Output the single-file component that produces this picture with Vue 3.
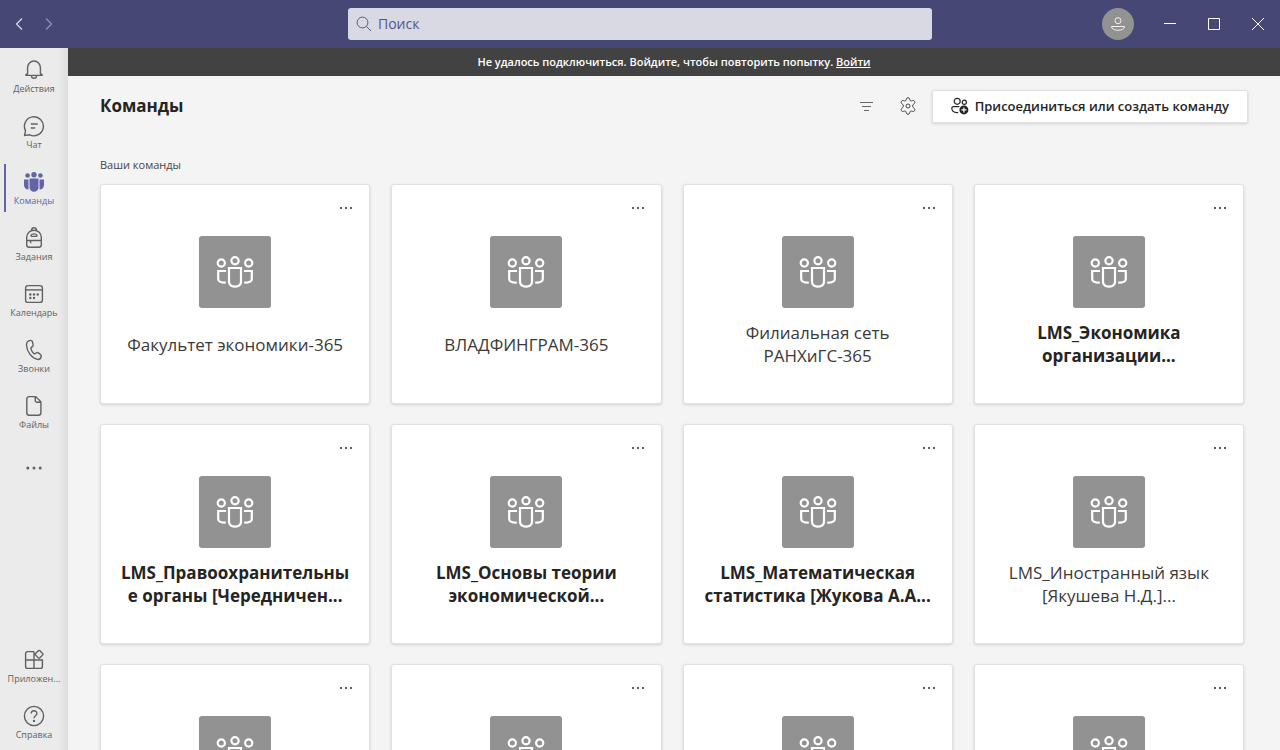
<script setup>
const nav = [
  { id: 'bell', label: 'Действия' },
  { id: 'chat', label: 'Чат' },
  { id: 'teams', label: 'Команды', active: true },
  { id: 'tasks', label: 'Задания' },
  { id: 'calendar', label: 'Календарь' },
  { id: 'calls', label: 'Звонки' },
  { id: 'files', label: 'Файлы' },
]
const footNav = [
  { id: 'apps', label: 'Приложен...' },
  { id: 'help', label: 'Справка' },
]
const icons = {
  bell: '<path d="M2.6 16.4h16.8M4 16.2l.6-1.7V8.700a6.400 6.700 0 0 1 12.800 0v5.800l.6 1.700M2.600 16.400c0-.8 1.500-1 2-2M19.400 16.400c0-.8-1.500-1-2-2M8.500 16.700a2.500 2.600 0 0 0 5 0"/>',
  chat: '<path d="M1.600 20.400l.9-4.700a9.500 9.500 0 1 1 4.200 4.100zM7.800 9h7M7.800 13h4.400"/>',
  teams: '<g fill="currentColor" stroke="none"><circle cx="11" cy="3.700" r="2.700"/><circle cx="4.600" cy="4.500" r="2.300"/><circle cx="17.400" cy="4.500" r="2.300"/><path d="M6.500 7.600h9v8.900a4.500 4.200 0 0 1-9 0zM1 8.400h4.500v10.200C2.700 18.300 1 16.500 1 14.200zM21 8.400h-4.500v10.200c2.800-.3 4.500-2.100 4.500-4.400z"/></g>',
  tasks: '<path d="M8.700 3.300V2.700a2.300 1.900 0 0 1 4.600 0v.6M3.700 10.500a7.300 7.300 0 0 1 14.600 0v7.300a2.500 2.500 0 0 1-2.500 2.500H6.200a2.500 2.500 0 0 1-2.500-2.500zM3.900 13.500h14.200M7.600 13.500v2.800M8 8.600a3.100 2.300 0 0 1 6 0c0 .6-.3.800-.8.800H8.800c-.5 0-.8-.2-.8-.8z"/>',
  calendar: '<rect x="2.600" y="2.600" width="16.800" height="16.800" rx="2.500"/><path d="M2.600 6.900h16.800"/><g fill="currentColor" stroke="none"><circle cx="7.300" cy="11.500" r="1.200"/><circle cx="11" cy="11.500" r="1.200"/><circle cx="14.700" cy="11.500" r="1.200"/><circle cx="7.300" cy="15" r="1.200"/><circle cx="11" cy="15" r="1.200"/></g>',
  calls: '<path d="M7.400 1.400c-2.100.3-4 1.900-3.900 4.600.2 6.900 5.600 13.300 10.800 14.400 1.900.3 3.500-1.200 3.900-2.900.2-.8 0-1.200-.5-1.700l-2.300-1.900c-.7-.6-1.400-.6-2.100-.1l-1.200.9c-.5.300-.9.300-1.300-.1-1.600-1.600-2.500-3.300-2.900-5-.1-.5.100-.9.500-1.200l1-.8c.7-.5.900-1.200.7-1.900L9.400 2.500c-.3-.8-1-1.300-2-1.100z"/>',
  files: '<path d="M6.300 1.600h6.400l5.200 5.200v11a2.500 2.500 0 0 1-2.500 2.500H6.300a2.500 2.500 0 0 1-2.500-2.500V4.100a2.500 2.500 0 0 1 2.500-2.500zM12.300 1.800v3.700a1.700 1.700 0 0 0 1.700 1.700h3.700"/>',
  apps: '<path d="M11 2.600H4.600a2 2 0 0 0-2 2V17.400a2 2 0 0 0 2 2h12.800a2 2 0 0 0 2-2V11H2.600M11 2.600v16.800M15.500 1.600q.6-.5 1.200 0l3.100 3.100q.5.600 0 1.200l-3.100 3.100q-.6.500-1.200 0l-3.100-3.100q-.5-.6 0-1.200z"/>',
  help: '<circle cx="11" cy="11" r="9.600"/><path d="M8.200 8.600c0-3.800 5.700-3.700 5.700-.2 0 2.300-2.900 2.300-2.900 4.900"/><circle cx="11" cy="15.900" r=".5" fill="currentColor"/>',
}
const teams = [
  { lines: ['Факультет экономики-365'] },
  { lines: ['ВЛАДФИНГРАМ-365'] },
  { lines: ['Филиальная сеть', 'РАНХиГС-365'] },
  { lines: ['LMS_Экономика', 'организации...'], unread: true },
  { lines: ['LMS_Правоохранительны', 'е органы [Чередничен...'], unread: true },
  { lines: ['LMS_Основы теории', 'экономической...'], unread: true },
  { lines: ['LMS_Математическая', 'статистика [Жукова А.А...'], unread: true },
  { lines: ['LMS_Иностранный язык', '[Якушева Н.Д.]...'] },
  { lines: [] },
  { lines: [] },
  { lines: [] },
  { lines: [] },
]
</script>

<template>
  <div class="app">
    <header class="titlebar">
      <div class="history">
        <button aria-label="Назад"><svg width="12" height="14" viewBox="0 0 12 14"><path d="M9 1.500L3.500 7 9 12.500"/></svg></button>
        <button class="dim" aria-label="Вперед"><svg width="12" height="14" viewBox="0 0 12 14"><path d="M3 1.500L8.500 7 3 12.500"/></svg></button>
      </div>
      <label class="search">
        <svg width="16" height="16" viewBox="0 0 16 16"><circle cx="6.500" cy="6.500" r="5.400"/><path d="M10.500 10.500l4.500 4.500"/></svg>
        <input type="text" placeholder="Поиск" aria-label="Поиск" />
      </label>
      <div class="window">
        <button class="avatar" aria-label="Профиль">
          <svg width="16" height="16" viewBox="0 0 16 16"><circle cx="8" cy="4.700" r="3"/><path d="M1.500 10.500h13c0 5-13 5-13 0z"/></svg>
        </button>
        <button aria-label="Свернуть"><svg width="12" height="12" viewBox="0 0 12 12"><path d="M0 5.500h12"/></svg></button>
        <button aria-label="Развернуть"><svg width="12" height="12" viewBox="0 0 12 12"><path d="M.5 .5h11v11H.5z"/></svg></button>
        <button aria-label="Закрыть"><svg width="12" height="12" viewBox="0 0 12 12"><path d="M0 0l12 12M12 0L0 12"/></svg></button>
      </div>
    </header>

    <div class="body">
      <nav class="rail">
        <button v-for="n in nav" :key="n.id" class="item" :class="{ active: n.active }">
          <svg width="22" height="22" viewBox="0 0 22 22" v-html="icons[n.id]"></svg>
          <span>{{ n.label }}</span>
        </button>
        <button class="item more" aria-label="Еще">
          <svg width="22" height="22" viewBox="0 0 22 22"><g fill="currentColor" stroke="none"><circle cx="4.800" cy="11" r="1.500"/><circle cx="11" cy="11" r="1.500"/><circle cx="17.200" cy="11" r="1.500"/></g></svg>
        </button>
        <div class="spacer"></div>
        <button v-for="n in footNav" :key="n.id" class="item">
          <svg width="22" height="22" viewBox="0 0 22 22" v-html="icons[n.id]"></svg>
          <span>{{ n.label }}</span>
        </button>
      </nav>

      <main class="main">
        <div class="banner">Не удалось подключиться. Войдите, чтобы повторить попытку. <a href="#">Войти</a></div>
        <div class="head">
          <h1>Команды</h1>
          <button class="tool filter" aria-label="Фильтр">
            <svg width="16" height="16" viewBox="0 0 16 16"><path d="M2 4.500h13M4 8.500h9M6 12.500h5"/></svg>
          </button>
          <button class="tool" aria-label="Управление командами">
            <svg width="20" height="20" viewBox="0 0 20 20"><path d="M8.300 3.200q.3-1.500 1.700-1.500t1.700 1.500l.2.800q.4 1.300 1.700.9l.8-.3q1.500-.5 2.200.7t-.4 2.300l-.6.600q-1 .9-1 1.800t1 1.800l.6.600q1.100 1.100.4 2.300t-2.200.7l-.8-.3q-1.300-.4-1.700.9l-.2.800q-.3 1.500-1.700 1.500t-1.700-1.500l-.2-.8q-.4-1.300-1.700-.9l-.8.3q-1.500.5-2.200-.7t.4-2.300l.6-.6q1-.9 1-1.800t-1-1.800l-.6-.6q-1.100-1.100-.4-2.300t2.200-.7l.8.300q1.300.4 1.700-.9z"/><circle cx="10" cy="10" r="2"/></svg>
          </button>
          <button class="join">
            <svg width="18" height="18" viewBox="0 0 18 18"><circle cx="6.200" cy="4.300" r="3"/><circle cx="13.300" cy="5.300" r="2.100"/><path d="M8.300 9.700H2.400a1.600 1.600 0 0 0-1.600 1.600c0 2.700 2.200 4.200 5.200 4.300h1.200"/><circle cx="12.900" cy="12.900" r="4.500" fill="currentColor" stroke="none"/><path class="plus" d="M12.900 10.400v5M10.400 12.900h5"/></svg>
            <span>Присоединиться или создать команду</span>
          </button>
        </div>
        <h2>Ваши команды</h2>
        <div class="grid">
          <article v-for="(t, i) in teams" :key="i" class="card">
            <button class="dots" aria-label="Другие параметры">
              <svg width="14" height="4" viewBox="0 0 14 4"><path d="M1 1h2v2H1zM6 1h2v2H6zM11 1h2v2h-2z"/></svg>
            </button>
            <div class="logo">
              <svg width="40" height="36" viewBox="0 0 40 36"><circle cx="6.300" cy="9" r="3.600"/><circle cx="20" cy="6.700" r="3.600"/><circle cx="33.700" cy="9" r="3.600"/><path d="M14 14h12v13.500c0 1-.3 5.200-6 5.200s-6-4.200-6-5.200zM11 17H3.200v8c0 2.600 2.600 3.700 7.600 3.700M29 17h7.800v8c0 2.600-2.600 3.700-7.600 3.700"/></svg>
            </div>
            <div v-if="t.lines.length" class="name" :class="{ unread: t.unread }">
              <span v-for="l in t.lines" :key="l">{{ l }}</span>
            </div>
          </article>
        </div>
      </main>
    </div>
  </div>
</template>

<style>
body { margin: 0; overflow: hidden; }
</style>

<style scoped>
.app { height: 100vh; display: flex; flex-direction: column; overflow: hidden; background: #f4f4f4; color: #252423; font-family: "Open Sans", "Noto Sans", sans-serif; }
button { border: 0; padding: 0; margin: 0; background: none; color: inherit; font: inherit; display: flex; align-items: center; justify-content: center; }
svg { flex: none; display: block; fill: none; stroke: currentColor; }
.titlebar { flex: none; height: 48px; background: #464775; display: grid; grid-template-columns: 1fr 584px 1fr; align-items: center; color: #fff; }
.history { display: flex; padding-left: 13px; gap: 18px; color: #d5d5ee; }
.history svg { stroke-width: 1.3; }
.dim { color: #9091bb; }
.search { display: flex; align-items: center; gap: 6px; height: 32px; padding: 0 8px; background: #d9d9e4; border-radius: 3px; color: #56567f; }
.search input { flex: 1; min-width: 0; border: 0; padding: 0; outline: 0; background: none; font: 14px/20px "Open Sans", "Noto Sans", sans-serif; }
.search input::placeholder { color: #54558a; opacity: 1; }
.window { display: flex; justify-content: flex-end; height: 32px; }
.window button { width: 44px; }
.window .avatar { width: 32px; height: 32px; margin-right: 14px; border-radius: 50%; background: #929292; color: #f2f2f2; }
.body { flex: 1; min-height: 0; display: flex; }
.rail { flex: none; width: 68px; display: flex; flex-direction: column; background: linear-gradient(to right, #ebebeb 58px, #dedede 68px); color: #616161; }
.item { flex: none; width: 68px; height: 56px; flex-direction: column; justify-content: flex-start; box-sizing: border-box; padding-top: 11px; gap: 1px; font-size: 9px; line-height: 14px; }
.item svg { stroke-width: 1.4; }
.item.more { padding-top: 17px; }
.item.active { color: #6264a7; background: linear-gradient(#6264a7, #6264a7) 4px 4px / 2px 48px no-repeat; }
.spacer { flex: 1; }
.main { flex: 1; min-width: 0; }
.banner { height: 28px; background: #424242; color: #fff; font-size: 11px; line-height: 28px; font-weight: 600; text-align: center; }
.banner a { color: inherit; }
.head { display: flex; align-items: center; height: 60px; padding: 0 32px; }
h1 { flex: 1; margin: 0; font-size: 17px; line-height: 24px; font-weight: 700; }
.tool { width: 32px; height: 32px; margin-right: 10px; color: #484644; }
.filter { color: #6a6866; }
.tool + .tool { margin-right: 8px; }
.join { height: 33px; padding: 0 18px; gap: 6px; background: #fff; border: 1px solid #e1e1e1; border-radius: 2px; box-shadow: 0 1px 3px rgba(0, 0, 0, .15); font-size: 13px; font-weight: 600; }
.join svg { stroke-width: 1.200; }
.plus { stroke: #fff; }
h2 { margin: 21px 32px 0; font-size: 11px; line-height: 16px; font-weight: 400; color: #484644; }
.grid { display: grid; grid-template-columns: repeat(4, 1fr); column-gap: 21px; row-gap: 20px; margin: 11px 36px 0 32px; }
.card { display: flex; flex-direction: column; align-items: center; box-sizing: border-box; height: 220px; background: #fff; border: 1px solid #e1e1e1; border-radius: 3px; box-shadow: 0 1px 3px rgba(0, 0, 0, .15); }
.dots { align-self: flex-end; width: 32px; height: 32px; margin: 7px 7px 12px 0; color: #605e5c; }
.dots svg { fill: currentColor; stroke: none; }
.logo { flex: none; width: 72px; height: 72px; border-radius: 3px; background: #929292; color: #fff; display: flex; align-items: center; justify-content: center; }
.logo svg { stroke-width: 2.2; }
.name { display: flex; flex-direction: column; justify-content: center; align-items: center; height: 46px; margin-top: 13px; font-size: 17px; line-height: 23px; font-weight: 400; color: #3b3a39; white-space: nowrap; }
.unread { font-weight: 700; color: #252423; }
</style>
